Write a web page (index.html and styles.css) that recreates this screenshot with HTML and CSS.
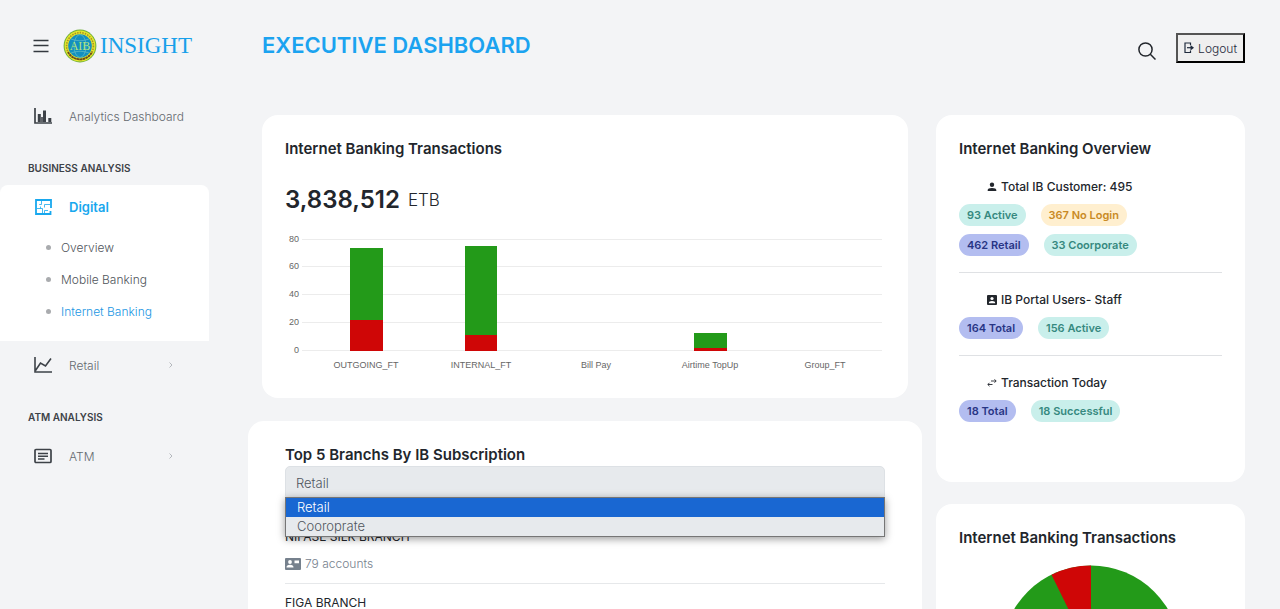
FILE: index.html
```html
<!DOCTYPE html>
<html lang="en">
<head>
<meta charset="utf-8">
<meta name="viewport" content="width=device-width, initial-scale=1">
<title>Executive Dashboard</title>
<link rel="stylesheet" href="styles.css">
</head>
<body>
<div class="app">
  <aside class="sidebar">
    <div class="brand">
      <button class="icon-btn" aria-label="Toggle menu">
        <svg width="16" height="14" viewBox="0 0 16 14" fill="none" stroke="#33383f" stroke-width="1.300"><path d="M.5 1.500h15M.5 6.500h15M.5 12.500h15"/></svg>
      </button>
      <a class="brand-link" href="#">
        <svg class="seal" width="34" height="34" viewBox="0 0 34 34" aria-hidden="true">
          <circle cx="17" cy="17" r="16.4" fill="#6fae3c"/>
          <circle cx="17" cy="17" r="15.4" fill="#e3e72b"/>
          <circle cx="17" cy="17" r="13.4" fill="none" stroke="#a8902a" stroke-width="1.600" stroke-dasharray="1.500 1.100"/>
          <path d="M5 23a13.500 13.500 0 0 0 24 0" fill="none" stroke="#6b4a1c" stroke-width="1.800" stroke-dasharray="2.400 .5"/>
          <circle cx="17" cy="17" r="11.800" fill="#138fc0"/>
          <g fill="none" stroke="#74c6c8" stroke-width=".6"><ellipse cx="17" cy="17" rx="6" ry="11.400"/><path d="M8 10q9 3.500 18 0M8 24q9-3.500 18 0"/></g>
          <text x="17" y="21" text-anchor="middle" class="seal-text">AIB</text>
        </svg>
        <span>INSIGHT</span>
      </a>
    </div>
    <nav class="nav" aria-label="Main">
      <a class="nav-item" href="#">
        <svg width="18" height="16" viewBox="0 0 18 16" fill="none" stroke="#3d4248"><path d="M1 0v15h17" stroke-width="1.700"/><path d="M5.300 6v8M10.500 2.500v11.500M15.800 10v4" stroke-width="3"/><path d="M8 9v5" stroke-width="1.600"/></svg>
        <span>Analytics Dashboard</span>
      </a>
      <h2 class="nav-title">BUSINESS ANALYSIS</h2>
      <div class="nav-group">
        <a class="nav-item current" href="#">
          <svg width="17" height="16" viewBox="0 0 17 16" fill="none" stroke="#18a8ee"><path d="M16 9V1H1v14h14.500v-3" stroke-width="1.800"/><path d="M6.500 2v3.500H4.200M2 9.500h5.500V14M9.500 14v-2.500H13M9.500 8.500v-3H15M5.500 7.500v2" stroke-width=".8"/></svg>
          <span>Digital</span>
        </a>
        <ul class="sub">
          <li><a href="#">Overview</a></li>
          <li><a href="#">Mobile Banking</a></li>
          <li><a class="on" href="#">Internet Banking</a></li>
        </ul>
      </div>
      <a class="nav-item" href="#">
        <svg width="18" height="16" viewBox="0 0 18 16" fill="none" stroke="#3d4248" stroke-width="1.600"><path d="M1 0v15h17M1.500 13.500 6.500 6l5 3L17 1.500"/></svg>
        <span>Retail</span>
        <svg class="chev" width="4" height="6" viewBox="0 0 4 6" fill="none" stroke="#b4b8bd"><path d="m.5.5 2.500 2.500L.5 5.500"/></svg>
      </a>
      <h2 class="nav-title">ATM ANALYSIS</h2>
      <a class="nav-item" href="#">
        <svg width="18" height="16" viewBox="0 0 18 16" fill="none" stroke="#3d4248" stroke-width="1.700"><rect x="1" y="1.500" width="16" height="13" rx="1"/><path d="M4 5.500h10M4 8.300h10M4 11h6.500" stroke-width="1.400"/></svg>
        <span>ATM</span>
        <svg class="chev" width="4" height="6" viewBox="0 0 4 6" fill="none" stroke="#b4b8bd"><path d="m.5.5 2.500 2.500L.5 5.500"/></svg>
      </a>
    </nav>
  </aside>

  <div class="page">
    <header class="topbar">
      <h1>EXECUTIVE DASHBOARD</h1>
      <div class="actions">
        <button class="icon-btn search" aria-label="Search">
          <svg width="18" height="18" viewBox="0 0 18 18" fill="none" stroke="#23272d" stroke-width="1.500"><circle cx="7.500" cy="7.500" r="6.600"/><path d="m12.300 12.300 5.200 5.200"/></svg>
        </button>
        <button class="logout">
          <svg width="10" height="12" viewBox="0 0 10 12" fill="none" stroke="#1f2a3c" stroke-width="1.200"><path d="M6.500 3V1H1v9.500h5.500v-2"/><path d="M3 5.700h4"/><path d="M6.500 3 10 5.700 6.500 8.400z" fill="#1f2a3c" stroke="none"/></svg>
          <span>Logout</span>
        </button>
      </div>
    </header>

    <main class="content">
      <div class="col-main">
        <section class="card tx">
          <h2>Internet Banking Transactions</h2>
          <p class="amount"><strong>3,838,512</strong> <span>ETB</span></p>
          <svg class="bars" viewBox="0 0 600 150" role="img" aria-label="Transactions by type">
            <g stroke="#ececec"><path d="M17 11.500h580M17 38.500h580M17 66.500h580M17 94.500h580M17 122.500h580"/></g>
            <g fill="#239a19"><rect x="65" y="20" width="33" height="73"/><rect x="180" y="18" width="32" height="90"/><rect x="409" y="105" width="33" height="15"/></g>
            <g fill="#cf0606"><rect x="65" y="92" width="33" height="31"/><rect x="180" y="107" width="32" height="16"/><rect x="409" y="120" width="33" height="3"/></g>
            <g class="axis" text-anchor="end"><text x="14" y="14">80</text><text x="14" y="41">60</text><text x="14" y="69">40</text><text x="14" y="97">20</text><text x="14" y="125">0</text></g>
            <g class="axis" text-anchor="middle"><text x="81" y="140">OUTGOING_FT</text><text x="196" y="140">INTERNAL_FT</text><text x="311" y="140">Bill Pay</text><text x="425" y="140">Airtime TopUp</text><text x="540" y="140">Group_FT</text></g>
          </svg>
        </section>

        <section class="card branches">
          <h2><label for="segment">Top 5 Branchs By IB Subscription</label></h2>
          <div class="picker">
            <select id="segment"><option>Retail</option><option>Cooroprate</option></select>
            <ul class="options">
              <li class="picked">Retail</li>
              <li>Cooroprate</li>
            </ul>
          </div>
          <ul class="branch-list">
            <li>
              <h3>NIFASE SILK BRANCH</h3>
              <p><svg width="16" height="12" viewBox="0 0 16 12"><rect width="16" height="12" rx="1" fill="#76818d"/><g fill="#fff"><circle cx="5" cy="4" r="1.900"/><path d="M1.500 9.500q0-2.700 3.500-2.700t3.500 2.700zM9.500 2.500H14v2.700H9.500z"/></g></svg><span>79 accounts</span></p>
            </li>
            <li><h3>FIGA BRANCH</h3></li>
          </ul>
        </section>
      </div>

      <div class="col-side">
        <section class="card overview">
          <h2>Internet Banking Overview</h2>
          <div class="stat">
            <h3><svg width="10" height="10" viewBox="0 0 10 10" fill="#22262c"><circle cx="5" cy="2.700" r="2.200"/><path d="M.7 9V8q0-2 4.300-2t4.300 2v1z"/></svg>Total IB Customer: 495</h3>
            <div class="tags"><span class="tag teal">93 Active</span><span class="tag amber">367 No Login</span></div>
            <div class="tags"><span class="tag blue">462 Retail</span><span class="tag teal">33 Coorporate</span></div>
          </div>
          <div class="stat">
            <h3><svg width="10" height="10" viewBox="0 0 10 10"><rect width="10" height="10" rx="1" fill="#22262c"/><g fill="#fff"><circle cx="5" cy="3.500" r="1.600"/><path d="M1.800 8.300q0-2.200 3.200-2.200t3.200 2.200z"/></g></svg>IB Portal Users- Staff</h3>
            <div class="tags"><span class="tag blue">164 Total</span><span class="tag teal">156 Active</span></div>
          </div>
          <div class="stat">
            <h3><svg width="10" height="10" viewBox="0 0 10 10" fill="none" stroke="#22262c" stroke-width=".9"><path d="M4 3h5M7.500 1.300 9.200 3 7.500 4.700M5.500 6.500H1M2.500 4.800.8 6.500l1.700 1.700"/></svg>Transaction Today</h3>
            <div class="tags"><span class="tag blue">18 Total</span><span class="tag teal">18 Successful</span></div>
          </div>
        </section>

        <section class="card share">
          <h2>Internet Banking Transactions</h2>
          <svg class="pie" width="180" height="180" viewBox="-90 -90 180 180" role="img" aria-label="Share of transactions">
            <circle r="89.500" fill="#239a19"/>
            <path d="M0 0-39.500-80.300A89.500 89.500 0 0 1 0-89.500z" fill="#cf0606"/>
          </svg>
        </section>
      </div>
    </main>
  </div>
</div>
</body>
</html>
```

FILE: styles.css
```css
* { box-sizing: border-box; }
body {
  margin: 0;
  background: #f3f4f6;
  color: #22262c;
  font-family: Inter, "Open Sans", sans-serif;
  font-size: 12px;
}
h1, h2, h3, p, ul { margin: 0; padding: 0; }
ul { list-style: none; }
a { color: inherit; text-decoration: none; }
svg { display: block; flex: none; }
button { font-family: inherit; cursor: pointer; }

.app { display: flex; height: 100vh; overflow: hidden; }

/* Sidebar */
.sidebar { flex: 0 0 209px; }
.brand { display: flex; align-items: center; gap: 14px; height: 92px; padding-left: 33px; }
.icon-btn { padding: 0; border: 0; background: none; }
.brand-link {
  display: flex;
  align-items: center;
  gap: 3px;
  color: #18a0ea;
  font: 23px "Liberation Serif", serif;
}
.seal-text { font: 12px "Liberation Serif", serif; fill: #b4e67c; }
.nav-item {
  display: flex;
  align-items: center;
  height: 48px;
  padding: 0 36px 0 34px;
  color: #64696f;
  font-weight: 300;
  white-space: nowrap;
}
.nav-item span { margin-left: 17px; }
.nav-item .chev { margin-left: auto; }
.nav-item:first-child span { margin-right: -36px; }
.nav-title {
  padding-left: 28px;
  color: #3d4248;
  font-size: 10px;
  font-weight: 600;
  line-height: 14px;
  margin: 21px 0 8px;
}
.nav-group { height: 156px; margin-top: 10px; border-radius: 8px 8px 0 0; background: #fff; }
.nav-item.current { height: 44px; margin-bottom: 2px; padding-left: 35px; color: #18a8ee; font-size: 13px; font-weight: 600; }
.sub li { display: flex; align-items: center; gap: 10px; height: 32px; padding-left: 46px; color: #50555b; font-weight: 300; }
.sub li::before { content: ""; width: 5px; height: 5px; border-radius: 50%; background: #a9abae; }
.sub .on { color: #2196e3; }

/* Header */
.page { flex: 1; min-width: 0; padding: 0 35px 0 53px; }
.topbar { display: flex; align-items: center; justify-content: space-between; height: 90px; margin-bottom: 25px; }
.topbar h1 { color: #1ba3f0; font-size: 22px; font-weight: 600; }
.actions { display: flex; align-items: center; gap: 20px; padding-top: 6px; }
.search { padding-top: 6px; }
.logout {
  display: flex;
  align-items: center;
  gap: 4px;
  height: 30px;
  padding: 0 6px;
  border: 2px outset #000;
  background: #efefef;
  color: #1f2a3c;
  font-size: 12px;
  font-weight: 300;
}

/* Cards */
.content { display: grid; grid-template-columns: repeat(12, minmax(0, 1fr)); gap: 28px; }
.col-main { grid-column: span 8; }
.col-side { grid-column: span 4; }
.card { padding: 23px; border-radius: 16px; background: #fff; }
.card h2 { font-size: 15px; font-weight: 600; line-height: 22px; }
.tx { padding-bottom: 20px; margin-bottom: 23px; }
.amount { display: flex; align-items: center; gap: 8px; margin-top: 24px; line-height: 32px; font-size: 17px; font-weight: 300; }
.amount strong { font-size: 24px; font-weight: 600; }
.bars { width: 100%; margin-top: 12px; }
.axis { font: 9px "Liberation Sans", sans-serif; fill: #666; }

.branches { margin: 0 -14px; padding: 23px 37px; min-height: 400px; }
.picker { position: relative; margin-bottom: 28px; }
.picker select {
  width: 100%;
  height: 34px;
  padding: 0 10px;
  appearance: none;
  border: 1px solid #dde1e5;
  border-radius: 5px;
  background: #e7eaed;
  color: #50565e;
  font: 300 13px Inter, sans-serif;
}
.options {
  position: absolute;
  top: 31px;
  left: 0;
  right: 0;
  border: 1px solid #767676;
  background: #e7eaed;
  box-shadow: 0 2px 8px rgba(0, 0, 0, .4);
  color: #50565e;
  font-size: 13px;
  font-weight: 300;
  line-height: 19px;
}
.options li { padding: 0 11px; }
.options .picked { background: #1967d2; color: #fff; }
.branch-list li { margin-bottom: 10px; border-bottom: 1px solid #e6e8ea; }
.branch-list h3 { font-size: 12px; font-weight: 400; line-height: 18px; }
.branch-list p { display: flex; align-items: center; gap: 4px; padding: 9px 0 10px; color: #76818d; font-weight: 300; line-height: 18px; }

.overview { height: 367px; margin-bottom: 22px; }
.stat { padding-bottom: 16px; }
.stat + .stat { border-top: 1px solid #dfe1e4; }
.stat h3 { display: flex; align-items: center; gap: 4px; padding: 18px 0 8px 28px; font-size: 12px; font-weight: 500; line-height: 18px; }
.tags { display: flex; gap: 15px; }
.tags + .tags { margin-top: 8px; }
.tag { padding: 0 8px; border-radius: 11px; font-size: 11px; font-weight: 600; line-height: 22px; }
.teal { background: #c9efeb; color: #36897f; }
.amber { background: #ffefcf; color: #c98a25; }
.blue { background: #b3bdf0; color: #283585; }
.pie { margin: 16px auto 0; }
```
